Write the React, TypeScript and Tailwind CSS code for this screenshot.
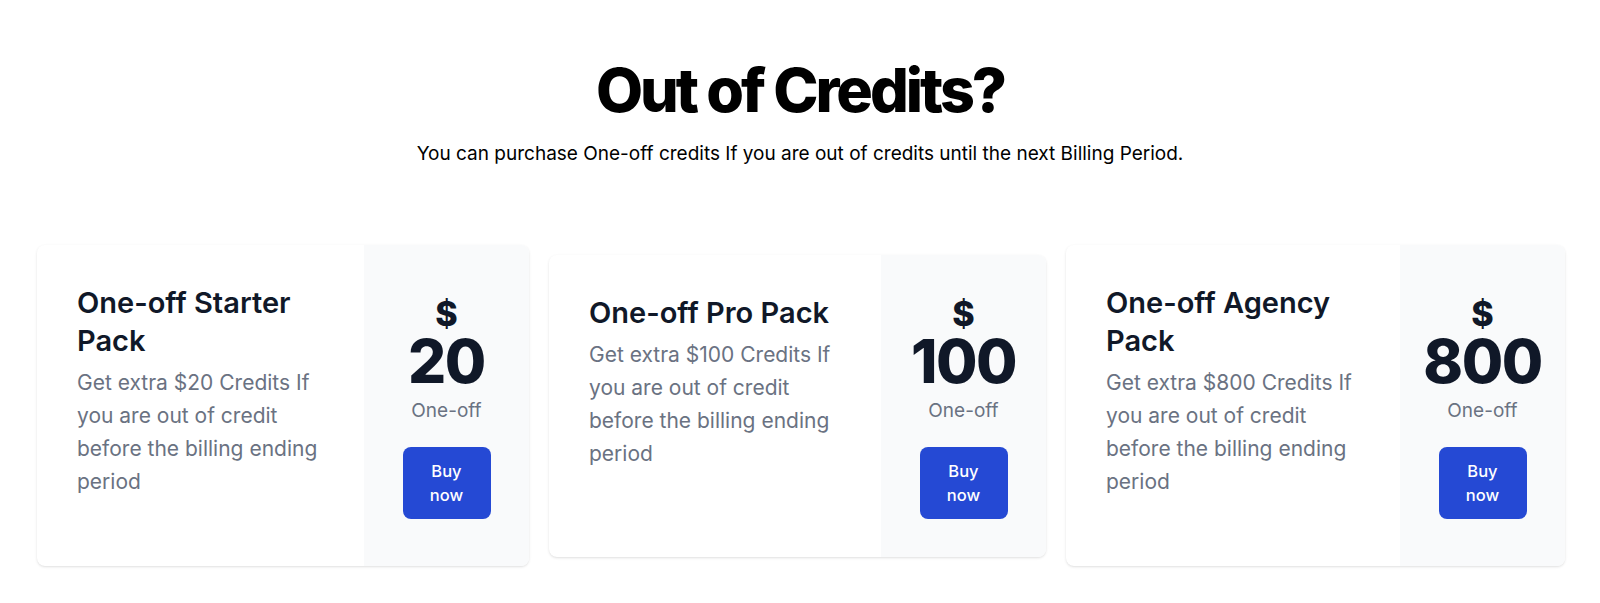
import React from 'react';

type Pack = {
  name: string;
  price: number;
  width: string;
};

const packs: Pack[] = [
  { name: 'One-off Starter Pack', price: 20, width: 'w-[492px]' },
  { name: 'One-off Pro Pack', price: 100, width: 'w-[497px]' },
  { name: 'One-off Agency Pack', price: 800, width: 'w-[499px]' },
];

function PackCard({ pack }: { pack: Pack }) {
  return (
    <div className={`${pack.width} flex overflow-hidden rounded-lg bg-white shadow-[0_1px_3px_0_rgba(0,0,0,0.1),0_1px_2px_-1px_rgba(0,0,0,0.1)]`}>
      {/* Description */}
      <div className="flex-1 px-10 pt-[39px] pb-[68px]">
        <h3 className="text-[29px] leading-[38px] font-semibold text-gray-900">{pack.name}</h3>
        <p className="mt-1.5 text-[21px] leading-[33px] text-gray-500">
          Get extra ${pack.price} Credits If you are out of credit before the billing ending period
        </p>
      </div>

      {/* Price */}
      <div className="w-[165px] shrink-0 bg-gray-50 py-[38px] flex flex-col items-center justify-center text-center">
        <span className="text-[34px] leading-9 font-extrabold text-gray-900 translate-y-[3px]">$</span>
        <span className="mt-0.5 text-6xl leading-none font-extrabold tracking-tight text-gray-900">{pack.price}</span>
        <span className="mt-1.5 text-[19px] leading-7 text-gray-500">One-off</span>
        <button className="mt-[22px] w-[88px] rounded-lg bg-[#2549d4] px-6 py-3 text-[16.5px] leading-6 font-medium text-white">
          Buy now
        </button>
      </div>
    </div>
  );
}

export default function App() {
  return (
    <div className="min-h-[603px] bg-white font-['Inter',sans-serif] pt-[60px]">
      {/* Header */}
      <div className="text-center">
        <h1 className="text-[61px] leading-none font-extrabold tracking-tighter text-black">Out of Credits?</h1>
        <p className="mt-[19px] text-[19px] leading-7 text-black">
          You can purchase One-off credits If you are out of credits until the next Billing Period.
        </p>
      </div>

      {/* Packs */}
      <div className="mt-[77px] flex items-center gap-5 pl-[37px]">
        {packs.map(p => (
          <PackCard key={p.name} pack={p} />
        ))}
      </div>
    </div>
  );
}
